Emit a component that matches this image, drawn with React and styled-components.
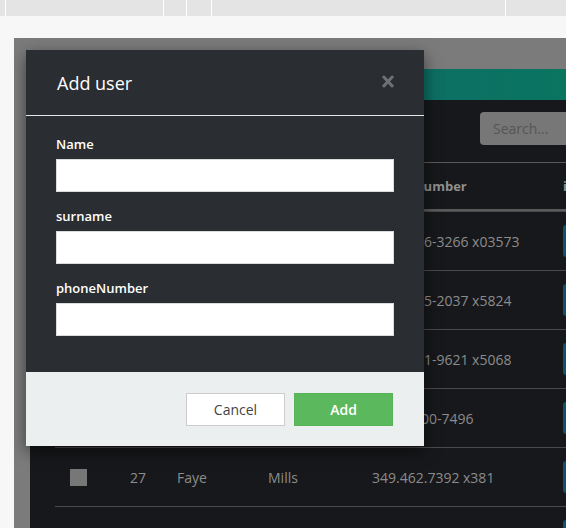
import React from "react";
import styled, { createGlobalStyle } from "styled-components";

const GlobalStyle = createGlobalStyle`
  html, body {
    margin: 0;
    padding: 0;
    width: 566px;
    height: 528px;
    overflow: hidden;
    background: #f7f7f7;
    font-family: "Open Sans", "Noto Sans", sans-serif;
  }
  * { box-sizing: border-box; }
`;

const Page = styled.div`
  width: 566px;
  height: 528px;
  display: flex;
  flex-direction: column;
`;

const TopStrip = styled.div`
  display: flex;
  height: 16px;
  flex-shrink: 0;
  background: #e4e4e4;
`;
const StripCell = styled.div`
  width: ${(p) => (p.$w ? `${p.$w}px` : "auto")};
  flex: ${(p) => (p.$w ? "0 0 auto" : "1")};
  border-right: ${(p) => (p.$w ? "1px solid #ffffff" : "none")};
`;

const Stage = styled.div`
  position: relative;
  flex: 1;
  margin: 22px 0 0 14px;
  padding: 31px 0 0 16px;
  background: #7b7b7b;
  overflow: hidden;
`;

const Panel = styled.div`
  width: 620px;
  height: 100%;
  background: #17181b;
  display: flex;
  flex-direction: column;
`;
const TealBar = styled.div`
  height: 31px;
  flex-shrink: 0;
  background: linear-gradient(90deg, #0f5f58 0%, #0d6e63 60%, #08785f 100%);
`;
const Toolbar = styled.div`
  display: flex;
  justify-content: flex-end;
  padding: 12px 0 17px 0;
`;
const Search = styled.div`
  width: 170px;
  height: 33px;
  border-radius: 4px;
  background: #777777;
  color: #555555;
  font-size: 14px;
  display: flex;
  align-items: center;
  padding-left: 13px;
`;

const Table = styled.div`
  margin-left: 25px;
  display: flex;
  flex-direction: column;
`;
const Row = styled.div`
  display: grid;
  grid-template-columns: 75px 47px 91px 104px 191px 1fr;
  align-items: center;
  height: ${(p) => (p.$head ? "49px" : "59px")};
  border-top: 1px solid ${(p) => (p.$head ? "#5a5a5a" : "#4a4a4c")};
  ${(p) => p.$head && "border-bottom: 2px solid #5a5a5a;"}
  color: ${(p) => (p.$head ? "#8f8f8f" : "#8c8c8c")};
  font-size: ${(p) => (p.$head ? "13px" : "14px")};
  font-weight: ${(p) => (p.$head ? 700 : 400)};
`;
const Cell = styled.div`
  white-space: nowrap;
`;
const Check = styled.div`
  width: 17px;
  height: 17px;
  margin-left: 15px;
  background: #777777;
`;
const ActionBtn = styled.div`
  width: 40px;
  height: 32px;
  border-radius: 3px;
  background: #11516a;
`;

const Modal = styled.div`
  position: absolute;
  left: 12px;
  top: 12px;
  width: 398px;
  background: #2a2d31;
  box-shadow: 0 5px 15px rgba(0, 0, 0, 0.5);
  display: flex;
  flex-direction: column;
`;
const ModalHeader = styled.div`
  height: 66px;
  padding: 0 30px 0 31px;
  border-bottom: 1px solid #e6e6e6;
  display: flex;
  align-items: center;
  justify-content: space-between;
`;
const Title = styled.div`
  color: #ffffff;
  font-size: 18px;
  font-weight: 500;
  margin-top: 1px;
`;
const Close = styled.svg`
  width: 12px;
  height: 13px;
  margin-top: -3px;
`;
const ModalBody = styled.div`
  padding: 20px 30px;
`;
const Group = styled.div`
  display: flex;
  flex-direction: column;
  margin-bottom: 16px;
`;
const Label = styled.label`
  color: #ffffff;
  font-size: 13px;
  font-weight: 600;
  line-height: 16px;
  margin-bottom: 7px;
`;
const Input = styled.input`
  height: 33px;
  width: 100%;
  border: 1px solid #dcdcdc;
  background: #ffffff;
  outline: none;
`;
const ModalFooter = styled.div`
  height: 74px;
  background: #eceff0;
  display: flex;
  justify-content: flex-end;
  align-items: center;
  gap: 9px;
  padding: 0 31px 0 0;
`;
const Button = styled.button`
  width: 99px;
  height: 33px;
  font-family: inherit;
  font-size: 14px;
  font-weight: ${(p) => (p.$primary ? 600 : 400)};
  color: ${(p) => (p.$primary ? "#ffffff" : "#444444")};
  background: ${(p) => (p.$primary ? "#5cb85c" : "#ffffff")};
  border: 1px solid ${(p) => (p.$primary ? "#56b356" : "#cccccc")};
  border-radius: 0;
  padding: 0;
  margin-top: 1px;
`;

const rows = [
  { id: 23, name: "Rahul", surname: "Kuhn", phone: "(206) 556-3266 x03573" },
  { id: 24, name: "Maud", surname: "Bauch", phone: "(743) 795-2037 x5824" },
  { id: 25, name: "Gust", surname: "Hayes", phone: "(518) 581-9621 x5068" },
  { id: 26, name: "Ivy", surname: "Lind", phone: "1-912-300-7496" },
  { id: 27, name: "Faye", surname: "Mills", phone: "349.462.7392 x381" },
  { id: 28, name: "Otto", surname: "Roob", phone: "1-624-514-0990" },
];

const fields = ["Name", "surname", "phoneNumber"];

export default function App() {
  return (
    <Page>
      <GlobalStyle />
      <TopStrip>
        <StripCell $w={6} />
        <StripCell $w={158} />
        <StripCell $w={23} />
        <StripCell $w={25} />
        <StripCell $w={294} />
        <StripCell />
      </TopStrip>
      <Stage>
        <Panel>
          <TealBar />
          <Toolbar>
            <Search>Search...</Search>
          </Toolbar>
          <Table>
            <Row $head>
              <Cell />
              <Cell>id</Cell>
              <Cell>name</Cell>
              <Cell>surname</Cell>
              <Cell>phoneNumber</Cell>
              <Cell>info</Cell>
            </Row>
            {rows.map((r) => (
              <Row key={r.id}>
                <Cell>
                  <Check />
                </Cell>
                <Cell>{r.id}</Cell>
                <Cell>{r.name}</Cell>
                <Cell>{r.surname}</Cell>
                <Cell>{r.phone}</Cell>
                <Cell>
                  <ActionBtn />
                </Cell>
              </Row>
            ))}
          </Table>
        </Panel>

        <Modal>
          <ModalHeader>
            <Title>Add user</Title>
            <Close viewBox="0 0 12 13">
              <path
                d="M1.8 2 L10.2 11 M10.2 2 L1.8 11"
                stroke="#6f7274"
                strokeWidth="3"
                strokeLinecap="round"
              />
            </Close>
          </ModalHeader>
          <ModalBody>
            {fields.map((f) => (
              <Group key={f}>
                <Label>{f}</Label>
                <Input type="text" />
              </Group>
            ))}
          </ModalBody>
          <ModalFooter>
            <Button>Cancel</Button>
            <Button $primary>Add</Button>
          </ModalFooter>
        </Modal>
      </Stage>
    </Page>
  );
}
